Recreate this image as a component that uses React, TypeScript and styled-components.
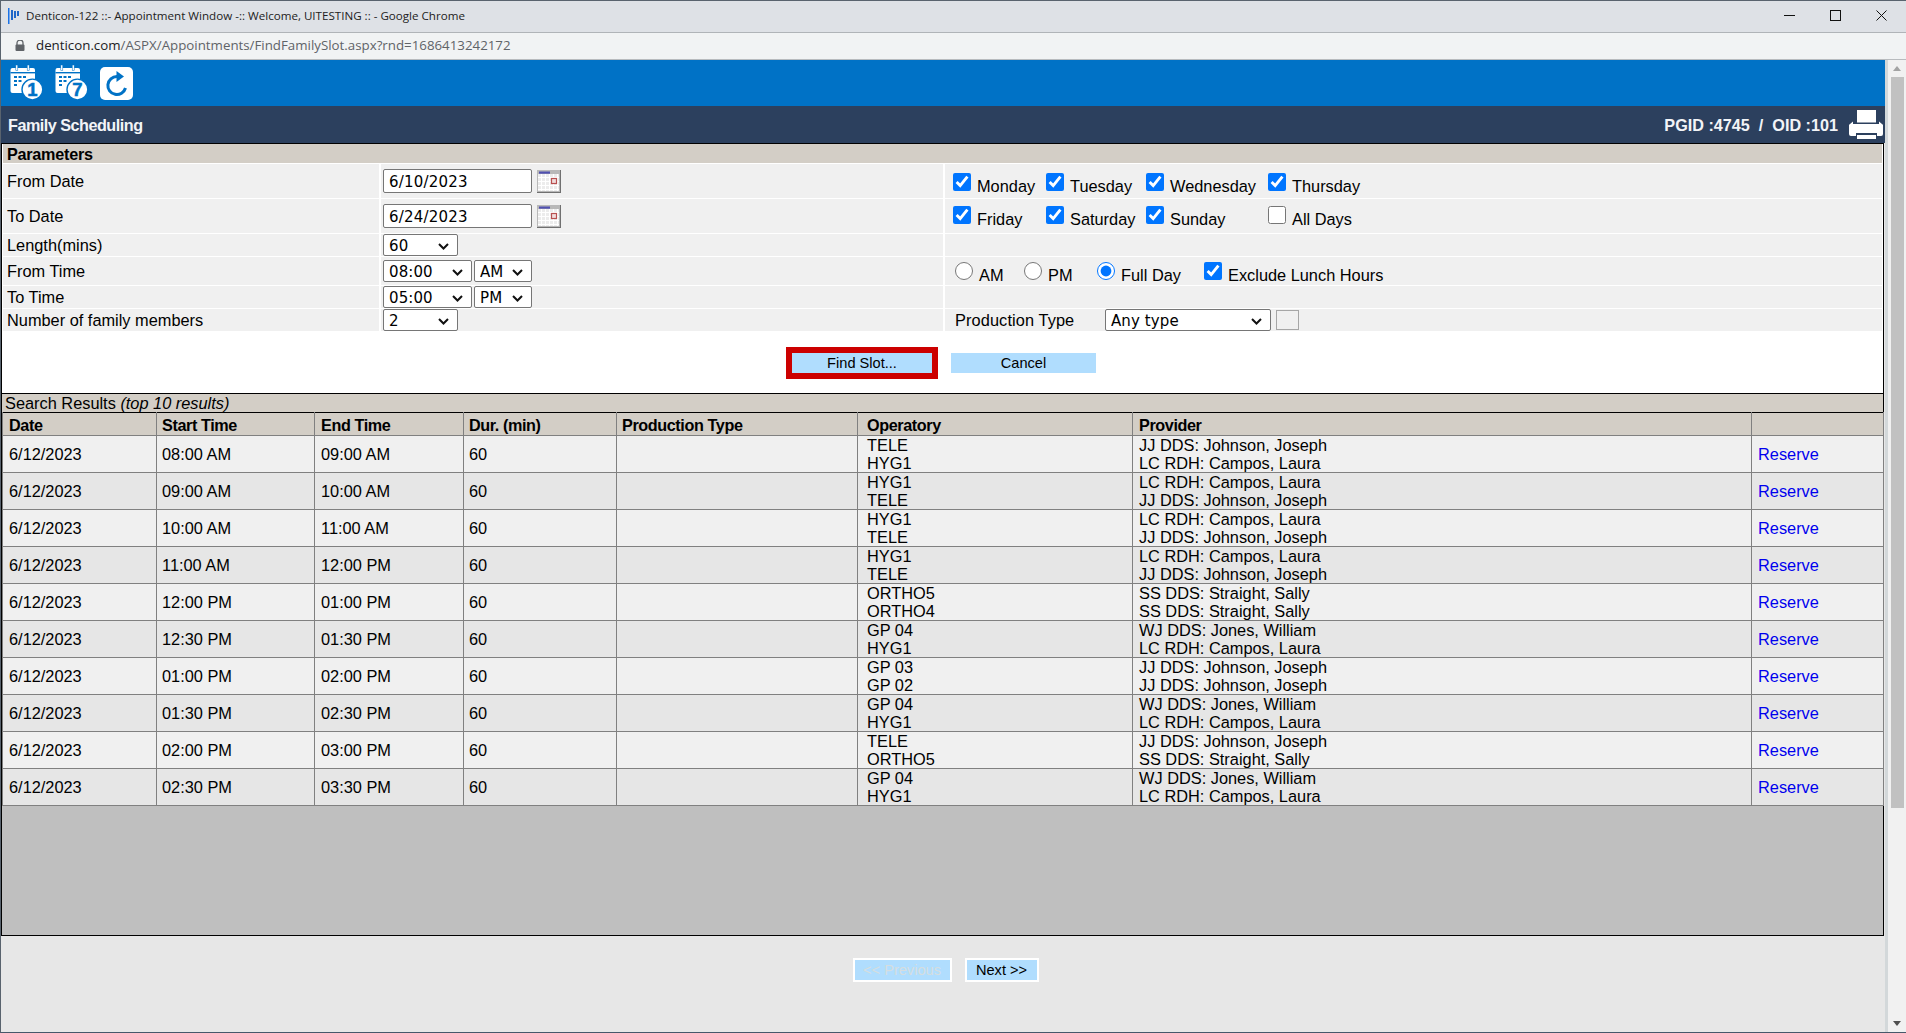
import React from 'react';
import styled, { createGlobalStyle } from 'styled-components';

const GlobalStyle = createGlobalStyle`
    html, body {
        margin: 0;
        padding: 0;
        overflow: hidden;
    }
    body {
        font-family: "Liberation Sans", Arial, sans-serif;
        font-size: 16.35px;
        color: #000;
    }
    * {
        box-sizing: border-box;
    }
`;

const Window = styled.div`
    width: 1906px;
    height: 1033px;
    display: flex;
    flex-direction: column;
    overflow: hidden;
    border-left: 1px solid #59636e;
    border-top: 1px solid #59636e;
    border-bottom: 1px solid #46586a;
    background: #e7e7e7;
`;
const TitleBar = styled.div`
    height: 31px;
    flex: none;
    display: flex;
    align-items: center;
    background: #dee1e6;
    padding: 0 2px 2px 7px;
`;
const TitleText = styled.span`
    flex: 1;
    margin-left: 6px;
    font-family: "Open Sans", "Noto Sans", sans-serif;
    font-size: 11.6px;
    color: #222;
`;
const WinButton = styled.div`
    width: 46px;
    height: 29px;
    display: flex;
    align-items: center;
    justify-content: center;
`;
const UrlBar = styled.div`
    height: 28px;
    flex: none;
    display: flex;
    align-items: center;
    gap: 11px;
    padding: 0 0 2px 14px;
    background: #f1f3f4;
    border-top: 1px solid #b0b4b8;
    border-bottom: 1px solid #b8bbbe;
    font-family: "Open Sans", "Noto Sans", sans-serif;
    font-size: 13.3px;
    color: #5f6368;
`;
const Host = styled.span`
    color: #202124;
`;
const Content = styled.div`
    flex: 1;
    min-height: 0;
    display: flex;
`;
const Page = styled.div`
    flex: 1;
    min-width: 0;
    display: flex;
    flex-direction: column;
`;
const ScrollBar = styled.div`
    width: 21px;
    flex: none;
    display: flex;
    flex-direction: column;
    align-items: center;
    background: #f1f1f1;
    border-left: 3px solid #d3d8da;
`;
const ArrowUp = styled.div`
    height: 17px;
    flex: none;
    display: flex;
    align-items: center;
    &::after {
        content: "";
        border-left: 4px solid transparent;
        border-right: 4px solid transparent;
        border-bottom: 5px solid #a3a3a3;
    }
`;
const Thumb = styled.div`
    width: 13px;
    height: 731px;
    flex: none;
    background: #c1c1c1;
`;
const ArrowDown = styled.div`
    margin-top: auto;
    height: 17px;
    flex: none;
    display: flex;
    align-items: center;
    &::after {
        content: "";
        border-left: 4px solid transparent;
        border-right: 4px solid transparent;
        border-top: 5px solid #505050;
    }
`;
const BlueBar = styled.div`
    height: 46px;
    flex: none;
    background: #0072c6;
    display: flex;
    align-items: center;
    gap: 11px;
    padding-left: 9px;
`;
const DarkBar = styled.div`
    height: 37px;
    flex: none;
    background: #2c405e;
    color: #f2f4f7;
    font-size: 16.2px;
    font-weight: bold;
    display: flex;
    align-items: center;
    padding: 0 2px 0 7px;
`;
const PageTitle = styled.span`
    flex: 1;
    padding-top: 2px;
    letter-spacing: -0.5px;
`;
const PracticeInfo = styled.span`
    margin-right: 11px;
    padding-top: 2px;
    white-space: pre;
`;
const Panel = styled.div`
    flex: none;
    width: 1883px;
    height: 251px;
    padding: 0 1px;
    background: #fff;
    border: 1px solid #000;
    display: flex;
    flex-direction: column;
`;
const PanelHeader = styled.div`
    height: 19px;
    flex: none;
    padding-left: 4px;
    margin-bottom: 1px;
    background: #d3cec6;
    font-size: 16.2px;
    font-weight: bold;
    letter-spacing: -0.25px;
    line-height: 21px;
`;
const Row = styled.div<{ $height: number }>`
    display: grid;
    grid-template-columns: 376px 562px 1fr;
    column-gap: 2px;
    height: ${p => p.$height}px;
    margin-bottom: 1px;
    flex: none;
`;
const LabelCell = styled.div`
    background: #f0f0f0;
    display: flex;
    align-items: center;
    padding-left: 4px;
`;
const ValueCell = styled.div`
    background: #f0f0f0;
    display: flex;
    align-items: center;
    padding-left: 2px;
`;
const OptionCell = styled.div<{ $bottom?: number; $cols?: string; $left?: number }>`
    background: #f0f0f0;
    display: ${p => (p.$cols ? 'grid' : 'flex')};
    grid-template-columns: ${p => p.$cols || 'none'};
    align-items: ${p => (p.$bottom === undefined ? 'center' : 'end')};
    padding-left: ${p => p.$left ?? 10}px;
    padding-bottom: ${p => p.$bottom ?? 0}px;
`;
const Check = styled.label`
    display: flex;
    align-items: flex-start;
    gap: 6px;
    height: 22px;
    line-height: 18px;
`;
const CheckBox = styled.input`
    width: 18px;
    height: 18px;
    margin: 0;
    flex: none;
`;
const CheckText = styled.span`
    margin-top: 4px;
    white-space: nowrap;
`;
const DateField = styled.input`
    width: 149px;
    height: 24px;
    padding: 2px 5px 0;
    border: 1px solid #767676;
    border-radius: 2px;
    background: #fff;
    font-family: "DejaVu Sans", sans-serif;
    font-size: 15px;
    letter-spacing: 0.2px;
    color: #000;
`;
const CalendarWrap = styled.span`
    display: flex;
    margin-left: 5px;
`;
const Select = styled.select<{ $width: number }>`
    appearance: none;
    width: ${p => p.$width}px;
    height: 22px;
    margin-right: 2px;
    padding: 2px 0 0 5px;
    border: 1px solid #767676;
    border-radius: 2px;
    background: #fff url("data:image/svg+xml,%3Csvg xmlns='http://www.w3.org/2000/svg' width='11' height='7' viewBox='0 0 11 7'%3E%3Cpath d='M1 1l4.5 4.5L10 1' fill='none' stroke='%23111' stroke-width='2'/%3E%3C/svg%3E") no-repeat right 8px top 8px;
    font-family: "DejaVu Sans", sans-serif;
    font-size: 15px;
    letter-spacing: 0.1px;
    color: #000;
`;
const ProductionLabel = styled.span`
    width: 150px;
    flex: none;
    letter-spacing: 0.1px;
`;
const ColorBox = styled.span`
    width: 23px;
    height: 20px;
    margin-left: 3px;
    border: 1px solid #a6a6a6;
    background: #f0f0f0;
`;
const ButtonRow = styled.div`
    flex: 1;
    display: flex;
    align-items: center;
    justify-content: center;
    gap: 13px;
    padding-right: 3px;
`;
const ActionButton = styled.button<{ $marked?: boolean; $width: number }>`
    width: ${p => p.$width}px;
    height: ${p => (p.$marked ? 32 : 20)}px;
    padding: 0;
    border: ${p => (p.$marked ? '6px solid #cc0000' : 'none')};
    background: #b0ddfe;
    font-family: "Liberation Sans", Arial, sans-serif;
    font-size: 14.6px;
    color: #000;
`;
const Results = styled.div`
    flex: 1;
    min-height: 0;
    width: 1883px;
    display: flex;
    flex-direction: column;
    background: #bfbfbf;
    border: 1px solid #000;
    border-top: none;
`;
const ResultsHeader = styled.div`
    height: 18px;
    flex: none;
    padding-left: 3px;
    background: #d3cec6;
    line-height: 19px;
`;
const Table = styled.table`
    width: 1881px;
    table-layout: fixed;
    border-collapse: collapse;
    border-top: 1px solid #000;
    flex: none;
`;
const HeadCell = styled.th<{ $pad: number }>`
    height: 23px;
    padding: 2px 0 0 ${p => p.$pad}px;
    text-align: left;
    font-size: 16.2px;
    font-weight: bold;
    letter-spacing: -0.4px;
    background: #d3cec6;
    border: 1px solid #808080;
    border-top: none;
    line-height: 18px;
`;
const BodyRow = styled.tr<{ $alt: boolean }>`
    background: ${p => (p.$alt ? '#e6e6e6' : '#f0f0f0')};
`;
const Cell = styled.td<{ $pad: number }>`
    height: 37px;
    padding: 0 0 0 ${p => p.$pad}px;
    border: 1px solid #808080;
    line-height: 18px;
    white-space: nowrap;
`;
const ReserveLink = styled.a`
    color: #0000ee;
    text-decoration: none;
`;
const Pager = styled.div`
    height: 96px;
    flex: none;
    display: flex;
    justify-content: center;
    align-items: flex-start;
    gap: 13px;
    padding: 22px 0 0 5px;
`;
const PagerButton = styled.button<{ $width: number }>`
    width: ${p => p.$width}px;
    height: 24px;
    padding: 0;
    border: 2px solid #fff;
    background: #b0ddfe;
    font-family: "Liberation Sans", Arial, sans-serif;
    font-size: 14.6px;
    color: #000;
    &:disabled {
        color: #d5dde0;
    }
`;

const CalendarBadgeIcon: React.FC<{ day: string }> = ({ day }) => (
    <svg width="34" height="36" viewBox="0 0 34 36">
        <path d="M2.5 3h20.5a2 2 0 0 1 2 2v21a2 2 0 0 1-2 2H2.5a2 2 0 0 1-2-2V5a2 2 0 0 1 2-2z" fill="#fff" />
        <rect x="0.5" y="7" width="24.5" height="1.4" fill="#0072c6" />
        <rect x="5.8" y="0" width="2" height="5.5" fill="#fff" stroke="#0072c6" strokeWidth="0.5" />
        <rect x="17.2" y="0" width="2" height="5.5" fill="#fff" stroke="#0072c6" strokeWidth="0.5" />
        <g fill="#0072c6">
            <rect x="4" y="11" width="3" height="2" />
            <rect x="8.5" y="11" width="3" height="2" />
            <rect x="13" y="11" width="3" height="2" />
            <rect x="4" y="15" width="3" height="2" />
            <rect x="8.5" y="15" width="3" height="2" />
            <rect x="4" y="19" width="3" height="2" />
        </g>
        <circle cx="22.4" cy="24.5" r="10.4" fill="#fff" stroke="#0072c6" strokeWidth="1.4" />
        <text x="22.4" y="31" textAnchor="middle" fontFamily="Liberation Sans, sans-serif" fontWeight="bold" fontSize="18.5" stroke="#0072c6" strokeWidth="0.5" fill="#0072c6">{day}</text>
    </svg>
);

const RefreshIcon = () => (
    <svg width="33" height="33" viewBox="0 0 33 33">
        <rect width="33" height="33" rx="5" fill="#fff" />
        <path d="M17 9.5a9 9 0 1 0 8.5 11.5" fill="none" stroke="#0072c6" strokeWidth="3" />
        <path d="M16.5 4l7.5 5.5-7.5 5.5z" fill="#0072c6" />
    </svg>
);

const PrinterIcon = () => (
    <svg width="34" height="29" viewBox="0 0 34 29">
        <rect x="8" y="0" width="19" height="12.5" fill="#fff" />
        <path d="M4 11.5v2.5h26v-2.5l3 2.5a2 2 0 0 1 1 2v8a2 2 0 0 1-2 2h-4v-3H7v3H2a2 2 0 0 1-2-2v-8a2 2 0 0 1 1-2z" fill="#fff" />
        <rect x="8" y="25" width="19" height="4" fill="#fff" />
    </svg>
);

const CalendarIcon = () => (
    <svg width="24" height="23" viewBox="0 0 24 23">
        <rect x="0" y="0" width="24" height="23" fill="#b8b8b8" />
        <rect x="1" y="4" width="21" height="17" fill="#ececec" />
        <path d="M1 7.5h21M1 11.5h21M1 15.5h21M1 19.5h21M4.5 4v17M8.5 4v17M12.5 4v17M16.5 4v17M20.5 4v17" stroke="#fff" strokeWidth="1" />
        <rect x="2" y="1.5" width="11" height="2.2" fill="#5050b0" />
        <rect x="14.5" y="8.5" width="5" height="5" fill="#f0dcdc" stroke="#b85050" strokeWidth="1.2" />
        <path d="M0 22.5h24M23.5 0v23" stroke="#707070" strokeWidth="1" />
    </svg>
);

const LockIcon = () => (
    <svg width="10" height="11" viewBox="0 0 10 11">
        <path d="M2 5V3a3 3 0 0 1 6 0v2" fill="none" stroke="#5f6368" strokeWidth="1.3" />
        <rect x="0.5" y="4.5" width="9" height="6.5" rx="1" fill="#5f6368" />
    </svg>
);

const FavIcon = () => (
    <svg width="12" height="16" viewBox="0 0 12 16">
        <rect x="0" y="0" width="1.5" height="16" fill="#1a73e8" />
        <rect x="3" y="2" width="2" height="10" fill="#1f66c8" />
        <rect x="6" y="3" width="2" height="7" fill="#1f66c8" />
        <rect x="9" y="3" width="2" height="5" fill="#1f66c8" />
    </svg>
);

const JJ = 'JJ DDS: Johnson, Joseph';
const LC = 'LC RDH: Campos, Laura';
const SS = 'SS DDS: Straight, Sally';
const WJ = 'WJ DDS: Jones, William';

const slots = [
    ['08:00 AM', '09:00 AM', 'TELE', 'HYG1', JJ, LC],
    ['09:00 AM', '10:00 AM', 'HYG1', 'TELE', LC, JJ],
    ['10:00 AM', '11:00 AM', 'HYG1', 'TELE', LC, JJ],
    ['11:00 AM', '12:00 PM', 'HYG1', 'TELE', LC, JJ],
    ['12:00 PM', '01:00 PM', 'ORTHO5', 'ORTHO4', SS, SS],
    ['12:30 PM', '01:30 PM', 'GP 04', 'HYG1', WJ, LC],
    ['01:00 PM', '02:00 PM', 'GP 03', 'GP 02', JJ, JJ],
    ['01:30 PM', '02:30 PM', 'GP 04', 'HYG1', WJ, LC],
    ['02:00 PM', '03:00 PM', 'TELE', 'ORTHO5', JJ, SS],
    ['02:30 PM', '03:30 PM', 'GP 04', 'HYG1', WJ, LC],
];

const columns = [154, 158, 149, 153, 241, 275, 619, 132];
const pads = [6, 5, 6, 5, 5, 9, 6, 6];
const headings = ['Date', 'Start Time', 'End Time', 'Dur. (min)', 'Production Type', 'Operatory', 'Provider', ''];

const DayCheck: React.FC<{ label: string; checked?: boolean }> = ({ label, checked }) => (
    <Check>
        <CheckBox type="checkbox" defaultChecked={checked} />
        <CheckText>{label}</CheckText>
    </Check>
);

const App: React.FC = () => {
    return (
        <Window>
            <GlobalStyle />
            <TitleBar>
                <FavIcon />
                <TitleText>Denticon-122 ::- Appointment Window -:: Welcome, UITESTING :: - Google Chrome</TitleText>
                <WinButton>
                    <svg width="11" height="11" viewBox="0 0 11 11"><path d="M0 5.5h11" stroke="#111" /></svg>
                </WinButton>
                <WinButton>
                    <svg width="11" height="11" viewBox="0 0 11 11"><rect x="0.5" y="0.5" width="10" height="10" fill="none" stroke="#111" /></svg>
                </WinButton>
                <WinButton>
                    <svg width="11" height="11" viewBox="0 0 11 11"><path d="M0.5 0.5l10 10M10.5 0.5l-10 10" stroke="#111" /></svg>
                </WinButton>
            </TitleBar>
            <UrlBar>
                <LockIcon />
                <span><Host>denticon.com</Host>/ASPX/Appointments/FindFamilySlot.aspx?rnd=1686413242172</span>
            </UrlBar>
            <Content>
                <Page>
                    <BlueBar>
                        <CalendarBadgeIcon day="1" />
                        <CalendarBadgeIcon day="7" />
                        <RefreshIcon />
                    </BlueBar>
                    <DarkBar>
                        <PageTitle>Family Scheduling</PageTitle>
                        <PracticeInfo>PGID :4745  /  OID :101</PracticeInfo>
                        <PrinterIcon />
                    </DarkBar>
                    <Panel>
                        <PanelHeader>Parameters</PanelHeader>
                        <Row $height={34}>
                            <LabelCell>From Date</LabelCell>
                            <ValueCell>
                                <DateField defaultValue="6/10/2023" />
                                <CalendarWrap><CalendarIcon /></CalendarWrap>
                            </ValueCell>
                            <OptionCell $bottom={3} $left={8} $cols="93px 100px 122px auto">
                                <DayCheck label="Monday" checked />
                                <DayCheck label="Tuesday" checked />
                                <DayCheck label="Wednesday" checked />
                                <DayCheck label="Thursday" checked />
                            </OptionCell>
                        </Row>
                        <Row $height={34}>
                            <LabelCell>To Date</LabelCell>
                            <ValueCell>
                                <DateField defaultValue="6/24/2023" />
                                <CalendarWrap><CalendarIcon /></CalendarWrap>
                            </ValueCell>
                            <OptionCell $bottom={5} $left={8} $cols="93px 100px 122px auto">
                                <DayCheck label="Friday" checked />
                                <DayCheck label="Saturday" checked />
                                <DayCheck label="Sunday" checked />
                                <DayCheck label="All Days" />
                            </OptionCell>
                        </Row>
                        <Row $height={22}>
                            <LabelCell>Length(mins)</LabelCell>
                            <ValueCell>
                                <Select $width={75} defaultValue="60"><option>60</option></Select>
                            </ValueCell>
                            <OptionCell />
                        </Row>
                        <Row $height={28}>
                            <LabelCell>From Time</LabelCell>
                            <ValueCell>
                                <Select $width={89} defaultValue="08:00"><option>08:00</option></Select>
                                <Select $width={58} defaultValue="AM"><option>AM</option></Select>
                            </ValueCell>
                            <OptionCell $bottom={1} $cols="69px 73px 107px auto">
                                <Check>
                                    <CheckBox type="radio" name="period" />
                                    <CheckText>AM</CheckText>
                                </Check>
                                <Check>
                                    <CheckBox type="radio" name="period" />
                                    <CheckText>PM</CheckText>
                                </Check>
                                <Check>
                                    <CheckBox type="radio" name="period" defaultChecked />
                                    <CheckText>Full Day</CheckText>
                                </Check>
                                <DayCheck label="Exclude Lunch Hours" checked />
                            </OptionCell>
                        </Row>
                        <Row $height={22}>
                            <LabelCell>To Time</LabelCell>
                            <ValueCell>
                                <Select $width={89} defaultValue="05:00"><option>05:00</option></Select>
                                <Select $width={58} defaultValue="PM"><option>PM</option></Select>
                            </ValueCell>
                            <OptionCell />
                        </Row>
                        <Row $height={22}>
                            <LabelCell>Number of family members</LabelCell>
                            <ValueCell>
                                <Select $width={75} defaultValue="2"><option>2</option></Select>
                            </ValueCell>
                            <OptionCell>
                                <ProductionLabel>Production Type</ProductionLabel>
                                <Select $width={166} defaultValue="Any type"><option>Any type</option></Select>
                                <ColorBox />
                            </OptionCell>
                        </Row>
                        <ButtonRow>
                            <ActionButton $marked $width={152}>Find Slot...</ActionButton>
                            <ActionButton $width={145}>Cancel</ActionButton>
                        </ButtonRow>
                    </Panel>
                    <Results>
                        <ResultsHeader>Search Results <em>(top 10 results)</em></ResultsHeader>
                        <Table>
                            <colgroup>
                                {columns.map((w, i) => <col key={i} width={w} />)}
                            </colgroup>
                            <thead>
                                <tr>
                                    {headings.map((h, i) => <HeadCell key={i} $pad={pads[i]}>{h}</HeadCell>)}
                                </tr>
                            </thead>
                            <tbody>
                                {slots.map((s, i) => (
                                    <BodyRow key={i} $alt={i % 2 === 1}>
                                        <Cell $pad={pads[0]}>6/12/2023</Cell>
                                        <Cell $pad={pads[1]}>{s[0]}</Cell>
                                        <Cell $pad={pads[2]}>{s[1]}</Cell>
                                        <Cell $pad={pads[3]}>60</Cell>
                                        <Cell $pad={pads[4]} />
                                        <Cell $pad={pads[5]}>{s[2]}<br />{s[3]}</Cell>
                                        <Cell $pad={pads[6]}>{s[4]}<br />{s[5]}</Cell>
                                        <Cell $pad={pads[7]}><ReserveLink href="#">Reserve</ReserveLink></Cell>
                                    </BodyRow>
                                ))}
                            </tbody>
                        </Table>
                    </Results>
                    <Pager>
                        <PagerButton $width={99} disabled>&lt;&lt; Previous</PagerButton>
                        <PagerButton $width={74}>Next &gt;&gt;</PagerButton>
                    </Pager>
                </Page>
                <ScrollBar>
                    <ArrowUp />
                    <Thumb />
                    <ArrowDown />
                </ScrollBar>
            </Content>
        </Window>
    );
};

export default App;
